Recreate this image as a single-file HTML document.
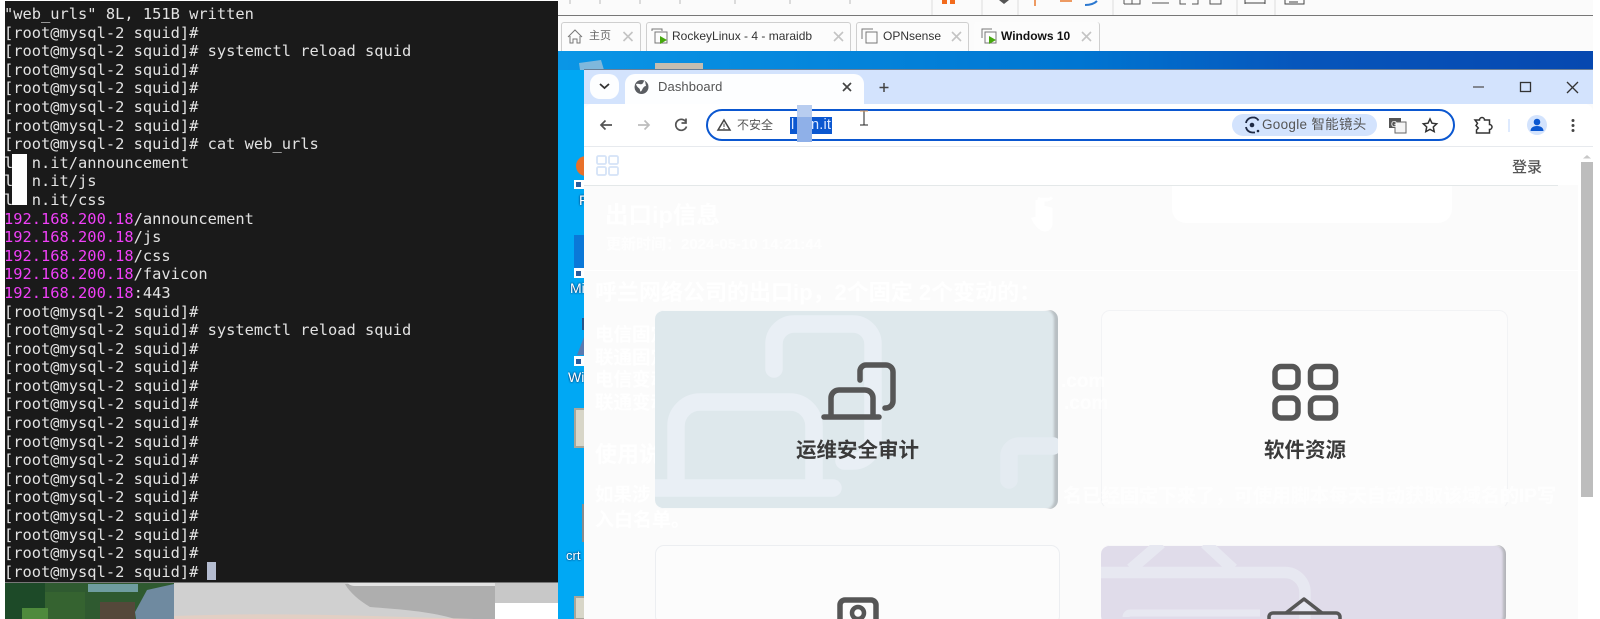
<!DOCTYPE html>
<html><head><meta charset="utf-8"><style>
html,body{margin:0;padding:0;background:#fff}
#r{position:relative;width:1600px;height:619px;overflow:hidden;background:#fff;font-family:"Liberation Sans","Noto Sans CJK SC",sans-serif}
#r div{position:absolute}
.t{white-space:pre;line-height:1}
#term{left:5px;top:1px;width:553px;height:581px;background:#1a1a1a}
#term pre{position:absolute;left:-1px;top:4px;margin:0;font:15.39px/18.6px "DejaVu Sans Mono",monospace;color:#e2e2e2}
#term b{font-weight:normal;color:#f040f8}
.g{color:#fff;font-weight:bold}
.tab{top:22px;height:29px;background:#fcfcfc;border:1px solid #cfcfcf;border-bottom:none;border-radius:3px 3px 0 0;box-sizing:border-box}
.tt{font-size:12px;color:#333;top:30px}
svg{position:absolute;left:0;top:0}
</style></head><body><div id="r">

<div id="term"><pre>"web_urls" 8L, 151B written
[root@mysql-2 squid]#
[root@mysql-2 squid]# systemctl reload squid
[root@mysql-2 squid]#
[root@mysql-2 squid]#
[root@mysql-2 squid]#
[root@mysql-2 squid]#
[root@mysql-2 squid]# cat web_urls
l  n.it/announcement
l  n.it/js
l  n.it/css
<b>192.168.200.18</b>/announcement
<b>192.168.200.18</b>/js
<b>192.168.200.18</b>/css
<b>192.168.200.18</b>/favicon
<b>192.168.200.18</b>:443
[root@mysql-2 squid]#
[root@mysql-2 squid]# systemctl reload squid
[root@mysql-2 squid]#
[root@mysql-2 squid]#
[root@mysql-2 squid]#
[root@mysql-2 squid]#
[root@mysql-2 squid]#
[root@mysql-2 squid]#
[root@mysql-2 squid]#
[root@mysql-2 squid]#
[root@mysql-2 squid]#
[root@mysql-2 squid]#
[root@mysql-2 squid]#
[root@mysql-2 squid]#
[root@mysql-2 squid]# </pre>
<div style="left:202px;top:561px;width:9px;height:18px;background:#b4bcd0"></div>
<div style="left:7px;top:153px;width:15px;height:51px;background:#fff"></div>
</div>

<svg width="560" height="619" style="top:0">
<rect x="5" y="583" width="169" height="36" fill="#2f5a30"/>
<rect x="5" y="583" width="40" height="36" fill="#1d4a28"/>
<rect x="45" y="592" width="40" height="27" fill="#356330"/>
<rect x="22" y="608" width="26" height="11" fill="#4e8a3c"/>
<rect x="88" y="584" width="50" height="8" fill="#6f9da0"/>
<rect x="100" y="602" width="35" height="17" fill="#54483a"/>
<path d="M135 612l12-22 27-6v35h-38z" fill="#6f8aa0"/>
<rect x="174" y="583" width="321" height="36" fill="#d0d0d0"/>
<path d="M345 584h150v35h-40c-25-8-60-10-85-12-10-6-20-14-25-23z" fill="#aeaeae"/>
<path d="M348 583h147v3H356c-4 0-7-1-8-3z" fill="#e4e4e4"/>
<path d="M174 616c100-4 200 0 300 3H174z" fill="#e2cfc4"/>
<rect x="495" y="583" width="63" height="20" fill="#c8c8c8"/>
<rect x="495" y="603" width="63" height="16" fill="#fff"/>
<rect x="5" y="582" width="553" height="1" fill="#777"/>
</svg>

<!-- vmware chrome -->
<div style="left:558px;top:0;width:1035px;height:52px;background:#fbfbfb"></div>
<div style="left:558px;top:15px;width:1035px;height:1px;background:#777"></div>
<svg width="1600" height="16">
<g fill="none" stroke="#bbb"><path d="M570 0v4M600 0v4M640 0v4M680 0v4M735 0v4M790 0v4M850 0v4"/></g>
<path d="M932 0v15M982 0v15M1018 0v15M1113 0v15M1237 0v15M1275 0v15" stroke="#ddd"/>
<rect x="942" y="0" width="5" height="4" fill="#f26b1d"/><rect x="950" y="0" width="5" height="4" fill="#f26b1d"/>
<path d="M999 0l5 4 5-4z" fill="#555"/>
<path d="M1035 0v6M1060 1h12" stroke="#ed9a62" stroke-width="2"/>
<path d="M1085 5c6 0 10-2 12-4" stroke="#2b78d0" stroke-width="2" fill="none"/>
<path d="M1124 4h16v-4M1124 0v4M1132 0v4M1152 3h17M1180 0v4h6M1192 4h6v-4M1210 0v4h11v-4" stroke="#555" fill="none"/>
<path d="M1245 3h20M1245 0v4M1265 0v4M1285 0v4h19v-4M1289 2h9" stroke="#444" fill="none"/>
</svg>
<div class="tab" style="left:561px;width:80px"></div>
<div class="tab" style="left:646px;width:205px"></div>
<div class="tab" style="left:856px;width:113px"></div>
<div class="tab" style="left:974px;width:126px;border-left:none;border-top:none;background:#fcfcfc"></div>
<div class="t tt" style="left:589px;color:#666;font-size:11px;top:31px">主页</div>
<div class="t tt" style="left:672px">RockeyLinux - 4 - maraidb</div>
<div class="t tt" style="left:883px">OPNsense</div>
<div class="t tt" style="left:1001px;font-weight:bold;color:#111">Windows 10</div>
<svg width="1600" height="52">
<path d="M568 37l7-7 7 7M570 36v7h3v-4h4v4h3v-7" fill="none" stroke="#777"/>
<g fill="none" stroke="#c4c4c4" stroke-width="1.6"><path d="M623.500 32l9 9m0-9l-9 9M834 32l9 9m0-9l-9 9M952 32l9 9m0-9l-9 9M1082 32l9 9m0-9l-9 9"/></g>
<g fill="none" stroke="#777"><path d="M652 31v-2h10v2"/><rect x="655" y="32" width="12" height="11"/></g>
<path d="M660 36l7 4-7 4z" fill="#46a80e"/>
<g fill="none" stroke="#777"><path d="M862 39v-10h11"/><rect x="866" y="32" width="11" height="11"/></g>
<g fill="none" stroke="#777"><path d="M982 38v-9h10"/><rect x="985" y="32" width="11" height="11"/></g>
<path d="M989 36l7 4-7 4z" fill="#46a80e"/>
</svg>

<!-- desktop -->
<svg width="1600" height="619">
<defs><linearGradient id="d" x1="0" x2="1" y1="0" y2="0"><stop offset="0" stop-color="#0a96e6"/><stop offset=".5" stop-color="#0076d2"/><stop offset=".72" stop-color="#0655bb"/><stop offset="1" stop-color="#0648b0"/></linearGradient></defs>
<rect x="558" y="51" width="35" height="568" fill="#00a8f4"/>
<rect x="558" y="51" width="1035" height="19" fill="url(#d)"/>
<rect x="574" y="235" width="10" height="35" fill="#0a78d8"/>
<path d="M579 63l22-3 3 10h-24z" fill="#7fb8dc"/>
<rect x="655" y="63" width="48" height="8" fill="#c4bdb0"/>
<circle cx="586" cy="166" r="10" fill="#e8702a"/>
<rect x="574" y="180" width="10" height="9" fill="#fff"/><rect x="576" y="182" width="5" height="5" fill="#2a5c9c"/>
<rect x="574" y="268" width="10" height="10" fill="#fff"/><rect x="576" y="271" width="5" height="5" fill="#2a5c9c"/>
<rect x="574" y="356" width="10" height="10" fill="#fff"/><rect x="576" y="359" width="5" height="5" fill="#2a5c9c"/>
<path d="M577 355l7-18v18z" fill="#5a7ab0"/>
<rect x="575" y="409" width="10" height="38" fill="#d8d6c8" stroke="#a8a69a" stroke-width="2"/>
<rect x="582" y="504" width="2" height="38" fill="#8a8a8a"/>
<rect x="575" y="597" width="10" height="22" fill="#d8d6c8" stroke="#a8a69a" stroke-width="2"/>
<rect x="582" y="318" width="2" height="12" fill="#27558a"/>
</svg>
<div class="t" style="left:579px;top:193px;font-size:14px;color:#fff;text-shadow:0 0 2px #003">F</div>
<div class="t" style="left:570px;top:281px;font-size:14px;color:#fff;text-shadow:0 0 2px #003;width:14px;overflow:hidden">Mi</div>
<div class="t" style="left:568px;top:370px;font-size:14px;color:#fff;text-shadow:0 0 2px #003;width:16px;overflow:hidden">Wi</div>
<div class="t" style="left:566px;top:549px;font-size:13px;color:#fff;text-shadow:0 0 2px #003;width:18px;overflow:hidden">crt</div>

<!-- browser window -->
<div style="left:584px;top:70px;width:1009px;height:549px;background:#fbfbfb"></div>
<div style="left:584px;top:69px;width:1009px;height:1px;background:#6b7f96"></div>
<div style="left:584px;top:70px;width:1009px;height:34px;background:#d3e3fd"></div>
<div style="left:584px;top:104px;width:1009px;height:42px;background:#fff;border-radius:8px 8px 0 0"></div>
<div style="left:584px;top:146px;width:1009px;height:39px;background:#fff"></div>
<div style="left:584px;top:146px;width:1009px;height:1px;background:#e7eaee"></div>
<div style="left:584px;top:185px;width:974px;height:1px;background:#e4e8e9"></div>
<div style="left:1578px;top:185px;width:15px;height:434px;background:#fff"></div>
<div style="left:1581px;top:162px;width:12px;height:335px;background:#bdbdbd"></div>
<div style="left:590px;top:74px;width:29px;height:25px;background:#fdfeff;border-radius:10px"></div>
<div style="left:625px;top:74px;width:239px;height:30px;background:#fdfeff;border-radius:10px 10px 0 0"></div>
<div class="t" style="left:658px;top:80px;font-size:13px;letter-spacing:.1px;color:#555">Dashboard</div>

<!-- address -->
<div style="left:706px;top:109px;width:749px;height:32px;box-sizing:border-box;border:2px solid #0b57d0;border-radius:17px;background:#fff"></div>
<div class="t" style="left:737px;top:119px;font-size:12px;color:#555">不安全</div>
<div style="left:790px;top:117px;width:42px;height:17px;background:#0b57d0"></div>
<div style="left:797px;top:105px;width:15px;height:37px;background:#8fb0e8"></div>
<div style="left:797px;top:105px;width:15px;height:12px;background:#b8cdf0"></div>
<div class="t" style="left:791px;top:118px;font-size:14.5px;color:#dbe8ff">l</div>
<div class="t" style="left:811px;top:118px;font-size:14.5px;color:#dbe8ff;letter-spacing:.2px">n.it</div>
<div style="left:1232px;top:114px;width:145px;height:22px;background:#d3e3fd;border-radius:11px"></div>
<div class="t" style="left:1262px;top:118px;font-size:13.5px;letter-spacing:.3px;color:#555">Google 智能镜头</div>
<div class="t" style="left:1512px;top:160px;font-size:15px;font-weight:500;color:#555">登录</div>

<svg width="1600" height="190">
<path d="M600 84l4.500 4 4.500-4" fill="none" stroke="#333" stroke-width="1.800"/>
<circle cx="641.500" cy="87" r="7" fill="#5a5d62"/>
<path d="M636 84c3-1 4 1 6 0s1-3 3-3l1 5c-2 0-3 2-4 4s-2 2-2 0-3-2-4-6z" fill="#fdfeff"/>
<path d="M843 83l8 8m0-8l-8 8" stroke="#444" stroke-width="1.700"/>
<path d="M884 83v9M879.500 87.500h9" stroke="#444" stroke-width="1.500"/>
<path d="M1473 87h11" stroke="#555" stroke-width="1.300"/>
<rect x="1520.500" y="82.500" width="10" height="9" fill="none" stroke="#333" stroke-width="1.300"/>
<path d="M1567 82l11 11m0-11l-11 11" stroke="#333" stroke-width="1.300"/>
<path d="M612 125h-11m4.500-4.500l-4.500 4.500 4.500 4.500" fill="none" stroke="#555" stroke-width="1.700"/>
<path d="M638 125h11m-4.500-4.500l4.500 4.500-4.500 4.500" fill="none" stroke="#bdbdbd" stroke-width="1.700"/>
<path d="M686 122a5.500 5.500 0 1 0 .5 4.500M686 118.500v4.500h-4.500" fill="none" stroke="#555" stroke-width="1.700"/>
<path d="M724 120l6 10h-12z" fill="none" stroke="#444" stroke-width="1.500"/><path d="M724 123.500v3.500M724 128v1" stroke="#444"/>
<path d="M860 111h8M860 125h8M864 111v14" stroke="#222"/><path d="M860 111h8" stroke="#e09a50"/>
<path d="M1246 123a6.500 6.500 0 0 1 6.500-5.500h2a6.500 6.500 0 0 1 4 3M1246 127a6.500 6.500 0 0 0 7 5.500h2" fill="none" stroke="#1f2a44" stroke-width="1.800"/>
<circle cx="1252" cy="125" r="2.300" fill="#1f2a44"/><circle cx="1258" cy="131" r="1.300" fill="#1f2a44"/>
<rect x="1389" y="118" width="12" height="10" fill="#555"/><rect x="1395" y="122" width="11" height="11" fill="#f4f4f4" stroke="#666"/>
<text x="1391" y="127" font-size="8" fill="#fff" font-family="Liberation Sans">G</text>
<path d="M1430 119l2 4.200 4.700.6-3.400 3.200.9 4.600-4.200-2.300-4.200 2.300.9-4.600-3.400-3.200 4.700-.6z" fill="none" stroke="#333" stroke-width="1.500"/>
<path d="M1475 120h4.500a2.500 2.500 0 0 1 5 0h5v4.500a2.500 2.500 0 0 1 0 5v3.500h-13v-3l1.800-2-2.300-2.500 1.500-2.200z" fill="none" stroke="#333" stroke-width="1.500"/>
<path d="M1509 119v13" stroke="#d3e3fd" stroke-width="1.500"/>
<circle cx="1537" cy="125" r="10" fill="#d3e3fd"/>
<circle cx="1537" cy="122" r="3.300" fill="#0b57d0"/><path d="M1530.500 131c0-3.500 3-5 6.500-5s6.500 1.500 6.500 5z" fill="#0b57d0"/>
<g fill="#444"><circle cx="1573" cy="120.500" r="1.500"/><circle cx="1573" cy="125.500" r="1.500"/><circle cx="1573" cy="130.500" r="1.500"/></g>
<g fill="none" stroke="#d5e3f7" stroke-width="1.800"><rect x="597" y="156" width="9" height="8" rx="1.500"/><rect x="609" y="156" width="9" height="8" rx="1.500"/><rect x="597" y="167" width="9" height="8" rx="1.500"/><rect x="609" y="167" width="9" height="8" rx="1.500"/></g>
<path d="M1587 155l4 3.500h-8z" fill="#c8c8c8"/>
</svg>

<!-- ghost content -->
<div style="left:1172px;top:186px;width:280px;height:37px;background:#fff;border-radius:0 0 14px 14px"></div>
<div style="left:584px;top:270px;width:994px;height:1px;background:#fff"></div>
<div class="t g" style="left:605px;top:204px;font-size:23.500px">出口ip信息</div>
<div class="t g" style="left:606px;top:237px;font-size:15px;opacity:.9">更新时间：2024-05-10 14:21:44</div>
<div class="t g" style="left:595px;top:282px;font-size:22px">呼兰网络公司的出口ip，2个固定 2个变动的：</div>
<div class="t g" style="left:595px;top:324px;font-size:18.500px;line-height:22.600px">电信固定
联通固定
电信变动
联通变动</div>
<div class="t g" style="left:595px;top:444px;font-size:22px">使用说明</div>
<div class="t g" style="left:595px;top:486px;font-size:18.500px">如果涉</div>
<div class="t g" style="left:595px;top:511px;font-size:19px">入白名单。</div>
<svg width="1600" height="619"><path d="M1038 198c4 3 10 3 14-.5M1037 200v18l-4 1c3 6 8 11 12 11s6-3 6-7v-14l-8-2v-8" fill="#fff" stroke="#fff" stroke-width="3"/>
<path d="M1028 600c1-6 5-8 7-11v-2h2v9l8 3c2 5 1 15-1 20h-12c-3-6-3-13-4-19z" fill="#fff"/></svg>

<!-- cards -->
<div style="left:655px;top:310px;width:403px;height:199px;background:#dee8ec;border-radius:9px;overflow:hidden;box-shadow:inset -5px 0 2px -1px #b8bfc3,inset -1px 0 0 1px #fff">
<svg width="403" height="199" style="left:0;top:0"><g fill="none" stroke="#e9eff5" stroke-width="17.500" stroke-linecap="round" stroke-linejoin="round">
<path d="M119 59V34a20 20 0 0 1 20-20h59a20 20 0 0 1 20 20v97a20 20 0 0 1-20 20h-9"/>
<path d="M21 170V116a24 24 0 0 1 24-24h90a24 24 0 0 1 24 24v54"/>
<path d="M-20 178H178"/>
<path d="M354 170V146a10 10 0 0 1 10-10h34" stroke="#e4ebf1"/>
</g></svg>
</div>
<div style="left:1101px;top:310px;width:407px;height:199px;background:#fcfcfc;border-radius:9px;box-sizing:border-box;border:1px solid #f2f3f5;border-bottom-color:#fbfbfb"></div>
<div style="left:655px;top:545px;width:405px;height:80px;background:#fcfcfc;border-radius:9px;box-sizing:border-box;border:1px solid #eceef1"></div>
<div style="left:1101px;top:545px;width:405px;height:80px;background:#e0dcea;border-radius:9px;overflow:hidden;box-shadow:inset -4px 0 2px -1px #b4b4ba,inset -1px 0 0 1px #fff">
<svg width="405" height="80" style="left:0;top:0"><g fill="none" stroke="#e7e8f1" stroke-width="11.500">
<path d="M-10 27.500H184a20 20 0 0 1 20 20v40"/><path d="M30 24L60-2M132 24L104-2"/><path d="M25 72a4 4 0 0 1 4-4h130" stroke-width="7"/></g></svg>
</div>

<!-- text crossing the cards -->
<div class="t g" style="left:1061px;top:372px;font-size:19px;opacity:.85">.com</div>
<div class="t g" style="left:1064px;top:394px;font-size:19px;opacity:.85">.com</div>
<div class="t g" style="left:1063px;top:487px;font-size:19px;opacity:.9">名已经固定下来了，可使用脚本每天自动获取该域名的IP写</div>

<!-- icons -->
<svg width="1600" height="619"><g fill="none" stroke="#565656" stroke-width="5.500" stroke-linecap="round" stroke-linejoin="round">
<path d="M860 380v-9a6 6 0 0 1 6-6h20a7 7 0 0 1 7 7v29a7 7 0 0 1-7 7h-1"/>
<path d="M831 416v-18a8 8 0 0 1 8-8h26a8 8 0 0 1 8 8v18"/>
<path d="M824 417h55"/>
<rect x="1275" y="366.500" width="23" height="21" rx="6"/><rect x="1310.500" y="366.500" width="25" height="21" rx="6"/>
<rect x="1275" y="398" width="23" height="20" rx="6"/><rect x="1310.500" y="398" width="25" height="20" rx="6"/>
<rect x="840" y="600" width="36" height="30" rx="5"/>
<circle cx="858" cy="613" r="6" stroke-width="4.500"/>
</g>
<g fill="none" stroke="#565656" stroke-width="3.500" stroke-linejoin="round"><path d="M1286 613l18-14 18 14"/><rect x="1269" y="613" width="71" height="20" rx="4"/></g>
</svg>
<div class="t" style="left:796px;top:441px;font-size:20.500px;font-weight:bold;color:#3a3a3a">运维安全审计</div>
<div class="t" style="left:1264px;top:441px;font-size:20.500px;font-weight:bold;color:#3a3a3a">软件资源</div>
</div></body></html>
